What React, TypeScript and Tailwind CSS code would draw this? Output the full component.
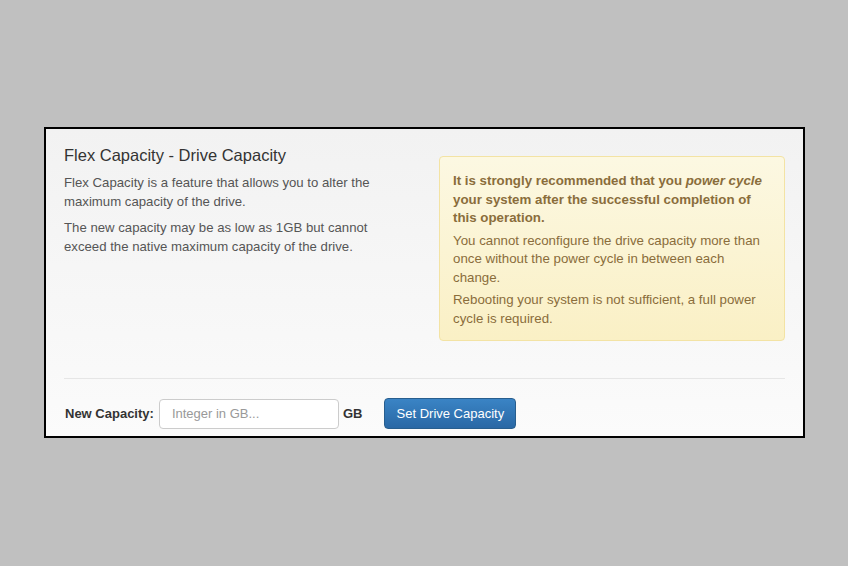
import React from "react";

export default function App() {
  return (
    <div
      className="w-[848px] h-[566px] bg-[#c0c0c0] pt-[127px] pl-[44px]"
      style={{ fontFamily: '"Liberation Sans", Arial, sans-serif' }}
    >
      <div className="w-[761px] h-[311px] border-2 border-black bg-gradient-to-b from-[#f2f2f2] to-[#fbfbfb] pt-[16px] pl-[18px] pr-[18px]">
        <div className="flex">
          <div className="w-[330px]">
            <h1 className="text-[16.5px] leading-[21px] text-[#333]">Flex Capacity - Drive Capacity</h1>
            <p className="mt-[8px] text-[13.2px] leading-[18.5px] text-[#555]">
              Flex Capacity is a feature that allows you to alter the maximum capacity of the drive.
            </p>
            <p className="mt-[8px] text-[13.2px] leading-[18.5px] text-[#555]">
              The new capacity may be as low as 1GB but cannot exceed the native maximum capacity of the drive.
            </p>
          </div>
          <div className="ml-auto mt-[11px] w-[346px] h-[185px] rounded-[4px] border border-[#f3e3a4] bg-gradient-to-b from-[#fcf8e2] to-[#faf0c5] pl-[13px] pr-[17px] pt-[15px] text-[13.3px] leading-[18.5px] text-[#8a6d3b]">
            <p className="font-bold">
              It is strongly recommended that you <i>power cycle</i> your system after the successful completion of this operation.
            </p>
            <p className="mt-[4px]">
              You cannot reconfigure the drive capacity more than once without the power cycle in between each change.
            </p>
            <p className="mt-[4px]">Rebooting your system is not sufficient, a full power cycle is required.</p>
          </div>
        </div>
        <div className="mt-[37px] h-px bg-[#e6e6e6]" />
        <div className="mt-[19px] flex items-center h-[31px]">
          <span className="text-[13px] font-bold text-[#333] ml-px">New Capacity:</span>
          <input
            placeholder="Integer in GB..."
            className="ml-[5px] w-[180px] h-[30px] rounded-[4px] border border-[#ccc] bg-white px-[12px] text-[13px] text-[#555] placeholder:text-[#999] outline-none"
          />
          <span className="ml-[4px] text-[13px] font-bold text-[#333]">GB</span>
          <button className="ml-[22px] w-[132px] h-[31px] rounded-[4px] border border-[#285e8e] bg-gradient-to-b from-[#3a84c5] to-[#2a68a5] text-[13px] text-white">
            Set Drive Capacity
          </button>
        </div>
      </div>
    </div>
  );
}
